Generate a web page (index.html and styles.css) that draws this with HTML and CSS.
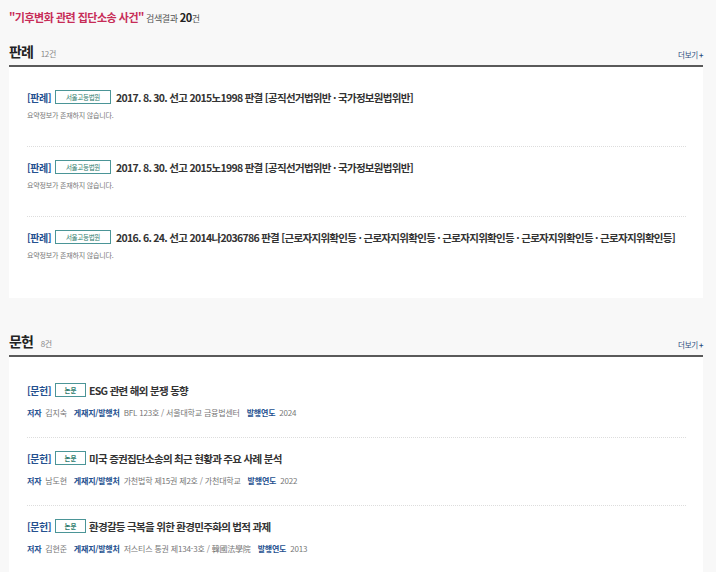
FILE: index.html
```html
<!DOCTYPE html>
<html lang="ko">
<head>
  <meta charset="UTF-8" />
  <title>검색결과</title>
  <link rel="stylesheet" href="styles.css">
</head>
<body>
  <p class="result-head"><span class="keyword">"기후변화 관련 집단소송 사건"</span> 검색결과 <b>20</b>건</p>

  <div class="section">
    <div class="section-head">
      <h2>판례 <span class="count">12건</span></h2>
      <a class="more" href="#">더보기<span class="plus">+</span></a>
    </div>
    <div class="card">
      <div class="item">
        <div class="item-title"><span class="kind">[판례]</span><span class="badge wide">서울고등법원</span><span class="name">2017. 8. 30. 선고 2015노1998 판결 [공직선거법위반 · 국가정보원법위반]</span></div>
        <p class="summary">요약정보가 존재하지 않습니다.</p>
      </div>
      <div class="item">
        <div class="item-title"><span class="kind">[판례]</span><span class="badge wide">서울고등법원</span><span class="name">2017. 8. 30. 선고 2015노1998 판결 [공직선거법위반 · 국가정보원법위반]</span></div>
        <p class="summary">요약정보가 존재하지 않습니다.</p>
      </div>
      <div class="item">
        <div class="item-title"><span class="kind">[판례]</span><span class="badge wide">서울고등법원</span><span class="name">2016. 6. 24. 선고 2014나2036786 판결 [근로자지위확인등 · 근로자지위확인등 · 근로자지위확인등 · 근로자지위확인등 · 근로자지위확인등]</span></div>
        <p class="summary">요약정보가 존재하지 않습니다.</p>
      </div>
    </div>
  </div>

  <div class="section">
    <div class="section-head">
      <h2>문헌 <span class="count">8건</span></h2>
      <a class="more" href="#">더보기<span class="plus">+</span></a>
    </div>
    <div class="card docs">
      <div class="item">
        <div class="item-title"><span class="kind">[문헌]</span><span class="badge">논문</span><span class="name">ESG 관련 해외 분쟁 동향</span></div>
        <p class="meta"><b>저자</b>김지숙<b>게재지/발행처</b>BFL 123호 / 서울대학교 금융법센터<b>발행연도</b>2024</p>
      </div>
      <div class="item">
        <div class="item-title"><span class="kind">[문헌]</span><span class="badge">논문</span><span class="name">미국 증권집단소송의 최근 현황과 주요 사례 분석</span></div>
        <p class="meta"><b>저자</b>남도현<b>게재지/발행처</b>가천법학 제15권 제2호 / 가천대학교<b>발행연도</b>2022</p>
      </div>
      <div class="item">
        <div class="item-title"><span class="kind">[문헌]</span><span class="badge">논문</span><span class="name">환경갈등 극복을 위한 환경민주화의 법적 과제</span></div>
        <p class="meta"><b>저자</b>김현준<b>게재지/발행처</b>저스티스 통권 제134-3호 / 韓國法學院<b>발행연도</b>2013</p>
      </div>
    </div>
  </div>
</body>
</html>
```

FILE: styles.css
```css
body {
  margin: 0;
  padding: 0 13px 0 9px;
  background: #f8f8f8;
  font-family: "Noto Sans CJK KR", "Noto Sans", sans-serif;
  color: #333;
}

.result-head {
  margin: 0;
  padding-top: 8px;
  height: 22px;
  line-height: 18px;
  font-size: 9px;
  letter-spacing: -0.4px;
  color: #555;
}

.keyword {
  font-size: 11px;
  font-weight: bold;
  letter-spacing: -0.5px;
  color: #c72c57;
}

.result-head b {
  font-size: 11px;
  color: #222;
}

.section {
  margin-top: 12px;
}

.section + .section {
  margin-top: 34px;
}

.section-head {
  display: flex;
  justify-content: space-between;
  align-items: flex-end;
  border-bottom: 2px solid #5a5a5a;
  padding-bottom: 2px;
}

h2 {
  margin: 0;
  font-size: 14px;
  line-height: 18px;
  font-weight: bold;
  letter-spacing: -1px;
  color: #222;
}

.count {
  font-size: 8px;
  font-weight: normal;
  letter-spacing: -0.3px;
  color: #888;
  margin-left: 5px;
}

.more {
  font-size: 7.5px;
  line-height: 12px;
  letter-spacing: -0.3px;
  color: #2a4d80;
  text-decoration: none;
  margin-bottom: 2px;
}

.plus {
  font-weight: bold;
  margin-left: 1px;
}

.card {
  background: #fff;
  padding: 10px 17px 12px 18px;
}

.item {
  padding: 10px 0 23px;
}

.item + .item {
  border-top: 1px dotted #ddd;
}

.item-title {
  display: flex;
  align-items: center;
  height: 20px;
  white-space: nowrap;
}

.kind {
  flex-shrink: 0;
  font-size: 10px;
  font-weight: bold;
  letter-spacing: -0.5px;
  color: #24508f;
}

.badge {
  flex-shrink: 0;
  box-sizing: border-box;
  width: 31px;
  height: 14px;
  line-height: 12px;
  margin: 0 3px 0 4px;
  border: 1px solid #4b9597;
  text-align: center;
  font-size: 6.5px;
  font-weight: bold;
  color: #2d7a6c;
}

.badge.wide {
  width: 56px;
  margin-right: 5px;
  font-weight: normal;
  letter-spacing: -0.3px;
}

.name {
  font-size: 10.5px;
  font-weight: bold;
  letter-spacing: -0.7px;
  color: #333;
}

.summary {
  margin: 0;
  font-size: 7px;
  line-height: 16px;
  letter-spacing: -0.2px;
  color: #777;
}

.docs {
  padding-top: 13px;
}

.docs .item {
  padding-bottom: 16px;
}

.meta {
  margin: 5px 0 0;
  font-size: 8px;
  line-height: 16px;
  letter-spacing: -0.2px;
  color: #777;
}

.meta b {
  color: #24508f;
  margin: 0 4px 0 7px;
}

.meta b:first-child {
  margin-left: 0;
}
```
